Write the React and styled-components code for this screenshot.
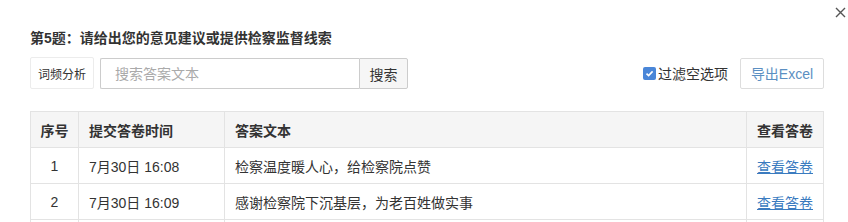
import React from 'react';
import styled, { createGlobalStyle } from 'styled-components';

const GlobalStyle = createGlobalStyle`
  html, body {
    margin: 0;
    padding: 0;
    background: #fff;
    overflow: hidden;
  }
  body {
    font-family: "Liberation Sans", "Noto Sans CJK SC", sans-serif;
    color: #333;
  }
`;

const Dialog = styled.div`
  position: relative;
  width: 848px;
  height: 222px;
  box-sizing: border-box;
  padding: 28px 24px 0 30px;
  overflow: hidden;
`;

const CloseButton = styled.button`
  position: absolute;
  top: 5px;
  right: 1px;
  width: 14px;
  height: 14px;
  padding: 0;
  border: none;
  background: none;
  display: flex;
  align-items: center;
  justify-content: center;
  cursor: pointer;
`;

const Title = styled.h3`
  margin: 0;
  font-size: 14px;
  line-height: 20px;
  font-weight: 700;
  color: #333;
`;

const Toolbar = styled.div`
  display: flex;
  align-items: center;
  height: 32px;
  margin-top: 9px;
`;

const PlainButton = styled.button`
  height: 32px;
  padding: 0 7px;
  border: 1px solid #ececec;
  border-radius: 2px;
  background: #fff;
  font-family: inherit;
  font-size: 12px;
  color: #333;
  cursor: pointer;
`;

const SearchGroup = styled.div`
  display: flex;
  margin-left: 6px;
  height: 31px;
  align-self: flex-end;
`;

const SearchInput = styled.input`
  width: 259px;
  box-sizing: border-box;
  height: 31px;
  padding: 0 14px;
  border: 1px solid #ccc;
  border-right: none;
  border-radius: 2px 0 0 2px;
  font-family: inherit;
  font-size: 14px;
  color: #333;
  outline: none;

  &::placeholder {
    color: #aaa;
  }
`;

const SearchButton = styled.button`
  width: 49px;
  height: 31px;
  border: 1px solid #ccc;
  border-radius: 0 2px 2px 0;
  background: #f6f6f6;
  font-family: inherit;
  font-size: 14px;
  color: #333;
  padding: 0;
  cursor: pointer;
`;

const Spacer = styled.div`
  flex: 1;
`;

const FilterLabel = styled.label`
  display: flex;
  align-items: center;
  gap: 2px;
  font-size: 14px;
  color: #333;
  margin-right: 12px;
  cursor: pointer;
`;

const CheckBox = styled.span`
  width: 13px;
  height: 13px;
  border-radius: 2px;
  background: #4a86d8;
  display: flex;
  align-items: center;
  justify-content: center;
`;

const ExportButton = styled.button`
  width: 84px;
  height: 31px;
  border: 1px solid #ddd;
  border-radius: 2px;
  background: #fff;
  font-family: inherit;
  font-size: 14px;
  color: #5b8fc2;
  padding: 0;
  cursor: pointer;
`;

const Table = styled.table`
  width: 794px;
  margin-top: 22px;
  border-collapse: collapse;
  table-layout: fixed;
  font-size: 14px;
`;

const HeadCell = styled.th`
  height: 35px;
  padding: 0 ${p => (p.$tight ? 0 : 10)}px;
  background: #f5f5f5;
  border: 1px solid #e3e3e3;
  font-weight: 700;
  color: #333;
  white-space: nowrap;
  text-align: ${p => p.$align || 'left'};
`;

const Cell = styled.td`
  height: 35px;
  padding: 0 ${p => (p.$tight ? 0 : 10)}px;
  border: 1px solid #e3e3e3;
  color: #333;
  text-align: ${p => p.$align || 'left'};
  white-space: nowrap;
`;

const Link = styled.a`
  color: #3a7bbf;
  text-decoration: underline;
  cursor: pointer;
`;

const rows = [
  { id: 1, time: '7月30日 16:08', text: '检察温度暖人心，给检察院点赞' },
  { id: 2, time: '7月30日 16:09', text: '感谢检察院下沉基层，为老百姓做实事' },
];

const App = () => (
  <>
    <GlobalStyle />
    <Dialog>
      <CloseButton aria-label="关闭">
        <svg width="11" height="11" viewBox="0 0 11 11">
          <path d="M1 1L10 10M10 1L1 10" stroke="#555" strokeWidth="1.4" fill="none" />
        </svg>
      </CloseButton>
      <Title>第5题：请给出您的意见建议或提供检察监督线索</Title>
      <Toolbar>
        <PlainButton>词频分析</PlainButton>
        <SearchGroup>
          <SearchInput placeholder="搜索答案文本" />
          <SearchButton>搜索</SearchButton>
        </SearchGroup>
        <Spacer />
        <FilterLabel>
          <CheckBox>
            <svg width="9" height="9" viewBox="0 0 9 9">
              <path d="M1.5 4.6L3.6 6.6L7.6 2.4" stroke="#fff" strokeWidth="1.6" fill="none" />
            </svg>
          </CheckBox>
          过滤空选项
        </FilterLabel>
        <ExportButton>导出Excel</ExportButton>
      </Toolbar>
      <Table>
        <colgroup>
          <col style={{ width: 48 }} />
          <col style={{ width: 146 }} />
          <col />
          <col style={{ width: 77 }} />
        </colgroup>
        <thead>
          <tr>
            <HeadCell $align="center" $tight>序号</HeadCell>
            <HeadCell>提交答卷时间</HeadCell>
            <HeadCell>答案文本</HeadCell>
            <HeadCell>查看答卷</HeadCell>
          </tr>
        </thead>
        <tbody>
          {rows.map(r => (
            <tr key={r.id}>
              <Cell $align="center" $tight>{r.id}</Cell>
              <Cell>{r.time}</Cell>
              <Cell>{r.text}</Cell>
              <Cell><Link>查看答卷</Link></Cell>
            </tr>
          ))}
          <tr>
            <Cell $tight />
            <Cell />
            <Cell />
            <Cell />
          </tr>
        </tbody>
      </Table>
    </Dialog>
  </>
);

export default App;
